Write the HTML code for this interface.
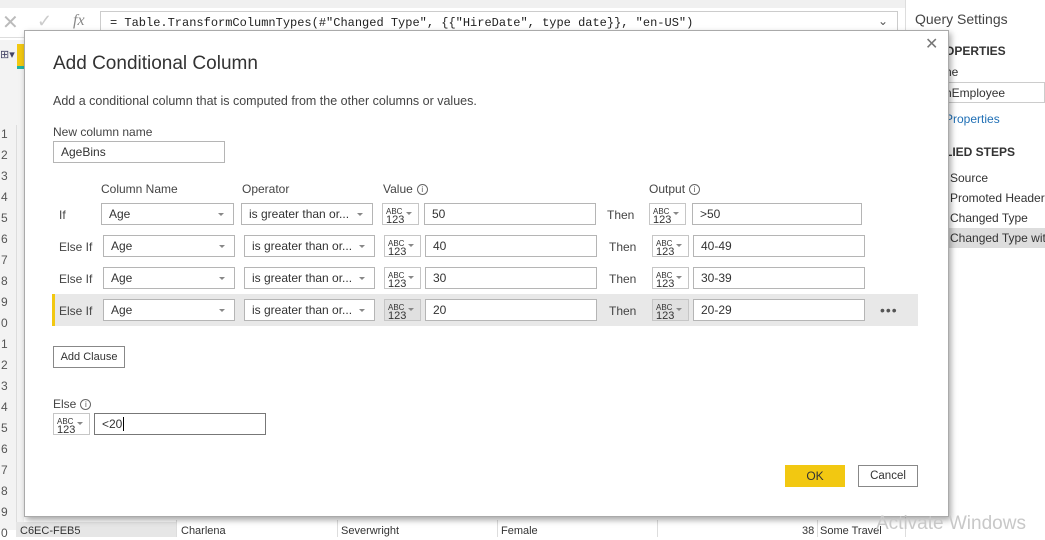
<!DOCTYPE html>
<html><head><meta charset="utf-8"><style>
*{box-sizing:border-box;margin:0;padding:0}
body{width:1045px;height:537px;overflow:hidden;background:#fff;font-family:"Liberation Sans",sans-serif;font-size:12px;color:#333;position:relative}
.a{position:absolute;white-space:nowrap}
.box{position:absolute;border:1px solid #b5b5b5;background:#fff;height:22px;font-size:12px;line-height:20px;padding-left:7px;color:#333}
.dd::after{content:"";position:absolute;right:9px;top:9px;border-left:3px solid transparent;border-right:3px solid transparent;border-top:3px solid #888}
.ty{position:absolute;border:1px solid #c6c6c6;background:#fff;height:22px;width:37px;font-size:8px;line-height:7px;padding:4px 0 0 3px;color:#333}
.ty b{font-weight:normal;font-size:11px;line-height:10px;display:block}
.ty::after{content:"";position:absolute;right:6px;top:8px;border-left:3px solid transparent;border-right:3px solid transparent;border-top:3px solid #888}
.lbl{position:absolute;font-size:12px;color:#444;white-space:nowrap}
.rn{position:absolute;left:0;width:16px;font-size:12px;color:#555;padding-left:1px}
.info{display:inline-block;width:11px;height:11px;border:1px solid #666;border-radius:50%;font-size:8px;line-height:9px;text-align:center;vertical-align:middle;margin-left:4px;color:#555}
</style></head><body>
<div class="a" style="left:0;top:0;width:905px;height:8px;background:#f0f0f0"></div>
<div class="a" style="left:0;top:8px;width:905px;height:30px;background:#fff;border-bottom:1px solid #ddd"></div>
<div class="a" style="left:2px;top:10px;font-size:20px;color:#bbb">✕</div>
<div class="a" style="left:37px;top:11px;font-size:18px;color:#ccc">✓</div>
<div class="a" style="left:73px;top:12px;font-size:16px;color:#888;font-style:italic;font-family:'Liberation Serif',serif">fx</div>
<div class="a" style="left:100px;top:11px;width:798px;height:24px;border:1px solid #ccc"></div>
<div class="a" style="left:110px;top:16px;font-family:'Liberation Mono',monospace;font-size:12px;color:#222">= Table.TransformColumnTypes(#"Changed Type", {{"HireDate", type date}}, "en-US")</div>
<div class="a" style="left:878px;top:14px;font-size:12px;color:#555">⌄</div>
<div class="a" style="left:0;top:40px;width:24px;height:490px;background:#f3f3f3"></div>
<div class="a" style="left:0;top:48px;font-size:11px;color:#446">⊞▾</div>
<div class="a" style="left:17px;top:44px;width:7px;height:22px;background:#f2c811"></div>
<div class="a" style="left:17px;top:66px;width:7px;height:3px;background:#21b3a3"></div>
<div class="a" style="left:16px;top:125px;width:1px;height:412px;background:#ddd"></div>
<div class="rn" style="top:127px">1</div><div class="rn" style="top:148px">2</div><div class="rn" style="top:169px">3</div><div class="rn" style="top:190px">4</div><div class="rn" style="top:211px">5</div><div class="rn" style="top:232px">6</div><div class="rn" style="top:253px">7</div><div class="rn" style="top:274px">8</div><div class="rn" style="top:295px">9</div><div class="rn" style="top:316px">0</div><div class="rn" style="top:337px">1</div><div class="rn" style="top:358px">2</div><div class="rn" style="top:379px">3</div><div class="rn" style="top:400px">4</div><div class="rn" style="top:421px">5</div><div class="rn" style="top:442px">6</div><div class="rn" style="top:463px">7</div><div class="rn" style="top:484px">8</div><div class="rn" style="top:505px">9</div><div class="rn" style="top:526px">0</div>
<div class="a" style="left:16px;top:522px;width:160px;height:15px;background:#e6e6e6"></div>
<div class="a" style="left:20px;top:525px;font-size:11px;color:#333">C6EC-FEB5</div>
<div class="a" style="left:176px;top:520px;width:1px;height:17px;background:#ddd"></div>
<div class="a" style="left:181px;top:525px;font-size:11px">Charlena</div>
<div class="a" style="left:337px;top:520px;width:1px;height:17px;background:#ddd"></div>
<div class="a" style="left:341px;top:525px;font-size:11px">Severwright</div>
<div class="a" style="left:497px;top:520px;width:1px;height:17px;background:#ddd"></div>
<div class="a" style="left:501px;top:525px;font-size:11px">Female</div>
<div class="a" style="left:657px;top:520px;width:1px;height:17px;background:#ddd"></div>
<div class="a" style="left:802px;top:525px;font-size:11px">38</div>
<div class="a" style="left:817px;top:520px;width:1px;height:17px;background:#ddd"></div>
<div class="a" style="left:820px;top:525px;font-size:11px">Some Travel</div>
<div class="a" style="left:905px;top:0;width:140px;height:537px;background:#fff;border-left:1px solid #ddd"></div>
<div class="a" style="left:915px;top:11px;font-size:14px;color:#444">Query Settings</div>
<div class="a" style="left:945px;top:44px;font-size:12px;font-weight:bold;color:#333">OPERTIES</div>
<div class="a" style="left:945px;top:65px;font-size:12px">ne</div>
<div class="a" style="left:940px;top:82px;width:105px;height:21px;border:1px solid #ccc"></div>
<div class="a" style="left:945px;top:86px;font-size:12px">nEmployee</div>
<div class="a" style="left:945px;top:112px;font-size:12px;color:#1f6fb5">Properties</div>
<div class="a" style="left:945px;top:145px;font-size:12px;font-weight:bold;color:#333">LIED STEPS</div>
<div class="a" style="left:950px;top:171px;font-size:12px">Source</div>
<div class="a" style="left:950px;top:191px;font-size:12px">Promoted Header</div>
<div class="a" style="left:950px;top:211px;font-size:12px">Changed Type</div>
<div class="a" style="left:945px;top:228px;width:100px;height:20px;background:#ddd;overflow:hidden"><span style="position:absolute;left:5px;top:3px;font-size:12px">Changed Type wit</span></div>
<div class="a" style="left:24px;top:30px;width:925px;height:487px;background:#fff;border:1px solid #aaa;box-shadow:2px 3px 6px rgba(0,0,0,.35)"></div>
<div class="a" style="left:925px;top:34px;font-size:16px;color:#777">✕</div>
<div class="a" style="left:53px;top:53px;font-size:19px;color:#333">Add Conditional Column</div>
<div class="a" style="left:53px;top:94px;font-size:12.5px;color:#444">Add a conditional column that is computed from the other columns or values.</div>
<div class="lbl" style="left:53px;top:125px">New column name</div>
<div class="box" style="left:53px;top:141px;width:172px;height:22px">AgeBins</div>
<div class="lbl" style="left:101px;top:182px">Column Name</div>
<div class="lbl" style="left:242px;top:182px">Operator</div>
<div class="lbl" style="left:383px;top:182px">Value<span class="info">i</span></div>
<div class="lbl" style="left:649px;top:182px">Output<span class="info">i</span></div>
<div class="a" style="left:52px;top:294px;width:866px;height:32px;background:#e8e8e8;border-left:3px solid #f2c811"></div>
<div class="lbl" style="left:59px;top:208px">If</div>
<div class="box dd" style="left:101px;top:203px;width:133px">Age</div>
<div class="box dd" style="left:241px;top:203px;width:132px">is greater than or...</div>
<div class="ty" style="left:382px;top:203px">ABC<b>123</b></div>
<div class="box" style="left:424px;top:203px;width:172px">50</div>
<div class="lbl" style="left:607px;top:208px">Then</div>
<div class="ty" style="left:649px;top:203px">ABC<b>123</b></div>
<div class="box" style="left:692px;top:203px;width:170px">&gt;50</div>
<div class="lbl" style="left:59px;top:240px">Else If</div>
<div class="box dd" style="left:103px;top:235px;width:132px">Age</div>
<div class="box dd" style="left:244px;top:235px;width:131px">is greater than or...</div>
<div class="ty" style="left:384px;top:235px">ABC<b>123</b></div>
<div class="box" style="left:425px;top:235px;width:172px">40</div>
<div class="lbl" style="left:609px;top:240px">Then</div>
<div class="ty" style="left:652px;top:235px">ABC<b>123</b></div>
<div class="box" style="left:693px;top:235px;width:172px">40-49</div>
<div class="lbl" style="left:59px;top:272px">Else If</div>
<div class="box dd" style="left:103px;top:267px;width:132px">Age</div>
<div class="box dd" style="left:244px;top:267px;width:131px">is greater than or...</div>
<div class="ty" style="left:384px;top:267px">ABC<b>123</b></div>
<div class="box" style="left:425px;top:267px;width:172px">30</div>
<div class="lbl" style="left:609px;top:272px">Then</div>
<div class="ty" style="left:652px;top:267px">ABC<b>123</b></div>
<div class="box" style="left:693px;top:267px;width:172px">30-39</div>
<div class="lbl" style="left:59px;top:304px">Else If</div>
<div class="box dd" style="left:103px;top:299px;width:132px">Age</div>
<div class="box dd" style="left:244px;top:299px;width:131px">is greater than or...</div>
<div class="ty" style="left:384px;top:299px;background:#e0e0e0">ABC<b>123</b></div>
<div class="box" style="left:425px;top:299px;width:172px">20</div>
<div class="lbl" style="left:609px;top:304px">Then</div>
<div class="ty" style="left:652px;top:299px;background:#e0e0e0">ABC<b>123</b></div>
<div class="box" style="left:693px;top:299px;width:172px">20-29</div>
<div class="a" style="left:880px;top:302px;font-size:14px;color:#555;letter-spacing:1px">•••</div>
<div class="a" style="left:53px;top:346px;width:72px;height:22px;border:1px solid #888;font-size:11px;line-height:20px;text-align:center;color:#333">Add Clause</div>
<div class="lbl" style="left:53px;top:397px">Else<span class="info">i</span></div>
<div class="ty" style="left:53px;top:413px;width:37px">ABC<b>123</b></div>
<div class="box" style="left:94px;top:413px;width:172px;border-color:#777">&lt;20<span style="border-left:1px solid #000;margin-left:1px"></span></div>
<div class="a" style="left:785px;top:465px;width:60px;height:22px;background:#f2c811;font-size:12px;line-height:22px;text-align:center;color:#333">OK</div>
<div class="a" style="left:858px;top:465px;width:60px;height:22px;border:1px solid #888;font-size:11.5px;line-height:20px;text-align:center;color:#333">Cancel</div>
<div class="a" style="left:876px;top:513px;font-size:19px;color:#c8c8c8">Activate Windows</div>
</body></html>
